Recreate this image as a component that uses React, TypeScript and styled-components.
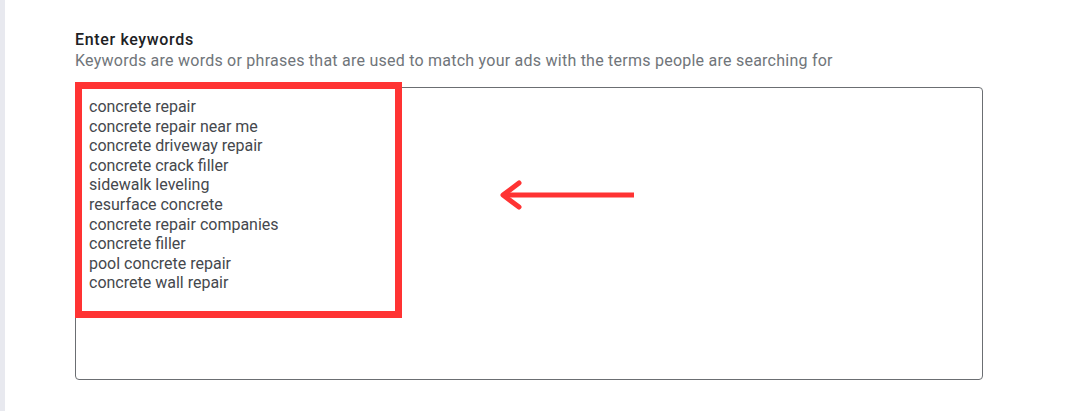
import React from "react";
import styled, { createGlobalStyle } from "styled-components";

const GlobalStyle = createGlobalStyle`
  html, body {
    margin: 0;
    padding: 0;
    background: #fff;
  }
  body {
    font-family: Roboto, "Liberation Sans", Arial, sans-serif;
  }
`;

const Page = styled.div`
  display: flex;
  width: 1080px;
  height: 411px;
  overflow: hidden;
`;

const SideStrip = styled.div`
  width: 5px;
  background: #e8e9ef;
  flex-shrink: 0;
`;

const Content = styled.div`
  flex: 1;
  padding: 30px 0 0 70px;
`;

const Title = styled.div`
  font-size: 16px;
  font-weight: 500;
  letter-spacing: 0.65px;
  color: #202124;
  line-height: 19px;
`;

const Hint = styled.div`
  font-size: 16px;
  letter-spacing: 0.24px;
  color: #70757a;
  line-height: 20px;
  margin-top: 2px;
`;

const FieldWrap = styled.div`
  position: relative;
  margin-top: 16px;
  width: 908px;
`;

const Field = styled.div`
  box-sizing: border-box;
  height: 293px;
  border: 1px solid #6b6e72;
  border-radius: 4px;
  padding: 9px 13px;
  ul {
    list-style: none;
    margin: 0;
    padding: 0;
    li {
      font-size: 16px;
      line-height: 19.6px;
      color: #45484d;
    }
  }
`;

const Highlight = styled.div`
  position: absolute;
  left: 0;
  top: -5px;
  width: 327px;
  height: 236px;
  box-sizing: border-box;
  border: 7px solid #ff3333;
  pointer-events: none;
`;

const Arrow = styled.svg`
  position: absolute;
  left: 422px;
  top: 90px;
`;

const keywords = [
  "concrete repair",
  "concrete repair near me",
  "concrete driveway repair",
  "concrete crack filler",
  "sidewalk leveling",
  "resurface concrete",
  "concrete repair companies",
  "concrete filler",
  "pool concrete repair",
  "concrete wall repair",
];

function App() {
  return (
    <>
      <GlobalStyle />
      <Page>
        <SideStrip />
        <Content>
          <Title>Enter keywords</Title>
          <Hint>
            Keywords are words or phrases that are used to match your ads with
            the terms people are searching for
          </Hint>
          <FieldWrap>
            <Field>
              <ul>
                {keywords.map((k) => (
                  <li key={k}>{k}</li>
                ))}
              </ul>
            </Field>
            <Highlight />
            <Arrow width="140" height="36" viewBox="0 0 140 36">
              <line
                x1="6"
                y1="18"
                x2="137"
                y2="18"
                stroke="#ff3333"
                strokeWidth="5"
              />
              <polyline
                points="22,6 6,18 22,30"
                fill="none"
                stroke="#ff3333"
                strokeWidth="5"
                strokeLinecap="round"
                strokeLinejoin="round"
              />
            </Arrow>
          </FieldWrap>
        </Content>
      </Page>
    </>
  );
}

export default App;
